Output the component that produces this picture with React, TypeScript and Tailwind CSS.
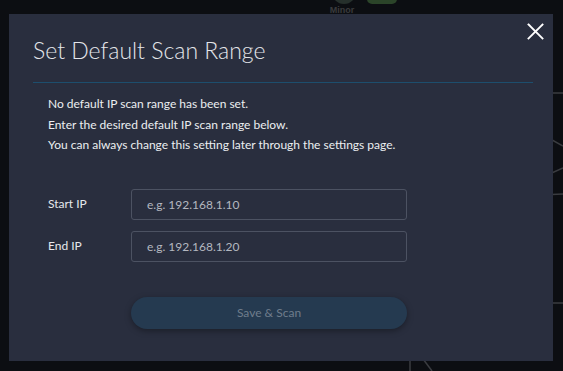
function Backdrop() {
  // faint network map behind the dialog
  return (
    <svg className="absolute inset-0" width="563" height="371" viewBox="0 0 563 371">
      <circle cx="344" cy="-8" r="12" fill="#26302c" />
      <rect x="367" y="-10" width="30" height="14" rx="5" fill="#2b4429" />
      <text x="342" y="13" textAnchor="middle" fontSize="9" fontWeight="700" fill="#3a3b3d" fontFamily="Liberation Sans, sans-serif">
        Minor
      </text>
      <g stroke="#3a3c40" strokeWidth="1.5" fill="none">
        <line x1="540" y1="93" x2="563" y2="93" />
        <line x1="545" y1="136" x2="563" y2="146" />
        <line x1="545" y1="176" x2="563" y2="168" />
        <line x1="540" y1="195" x2="563" y2="194" />
        <line x1="540" y1="303" x2="563" y2="303" />
        <line x1="410" y1="350" x2="410" y2="371" />
        <line x1="420" y1="355" x2="432" y2="371" />
      </g>
    </svg>
  );
}

function Field({ label, placeholder }: { label: string; placeholder: string }) {
  return (
    <div className="flex items-center">
      <label className="w-[83px] text-[12px] text-[#e6e8ec]">{label}</label>
      <input
        placeholder={placeholder}
        className="w-[276px] h-[31px] rounded-[3px] border border-[#4c5262] bg-transparent px-[15px] text-[12px] text-white placeholder:text-[#b4b8c0] outline-none"
      />
    </div>
  );
}

export default function App() {
  return (
    <div className="relative w-[563px] h-[371px] overflow-hidden bg-[#0c0e12] font-['Segoe_UI','Lato','Open_Sans',sans-serif]">
      <Backdrop />
      <div className="absolute left-[9px] top-[14px] w-[544px] h-[347px] bg-[#292e3e]">
        <button className="absolute right-[9px] top-[9px] text-white">
          <svg width="17" height="17" viewBox="0 0 17 17" stroke="currentColor" strokeWidth="1.9" strokeLinecap="square">
            <line x1="1.5" y1="1.5" x2="15.5" y2="15.5" />
            <line x1="15.5" y1="1.5" x2="1.5" y2="15.5" />
          </svg>
        </button>
        <div className="pl-[24px] pr-[20px] pt-[20px]">
          <h2 className="text-[23px] font-light leading-[32px] text-[#e4e6ea]">Set Default Scan Range</h2>
          <div className="mt-[16px] h-px bg-[#1d4e6d]" />
        </div>
        <div className="pl-[39px] pt-[11px] text-[12px] leading-[20.5px] text-[#eceef1]">
          <p>No default IP scan range has been set.</p>
          <p>Enter the desired default IP scan range below.</p>
          <p>You can always change this setting later through the settings page.</p>
        </div>
        <div className="pl-[39px] pt-[33px] flex flex-col gap-[11px]">
          <Field label="Start IP" placeholder="e.g. 192.168.1.10" />
          <Field label="End IP" placeholder="e.g. 192.168.1.20" />
        </div>
        <div className="pl-[122px] pt-[35px]">
          <button className="w-[276px] h-[32px] rounded-full bg-[#253a50] text-[12px] text-[#6f7d8c] shadow-[0_2px_6px_rgba(0,0,0,0.35)]">
            Save &amp; Scan
          </button>
        </div>
      </div>
    </div>
  );
}
